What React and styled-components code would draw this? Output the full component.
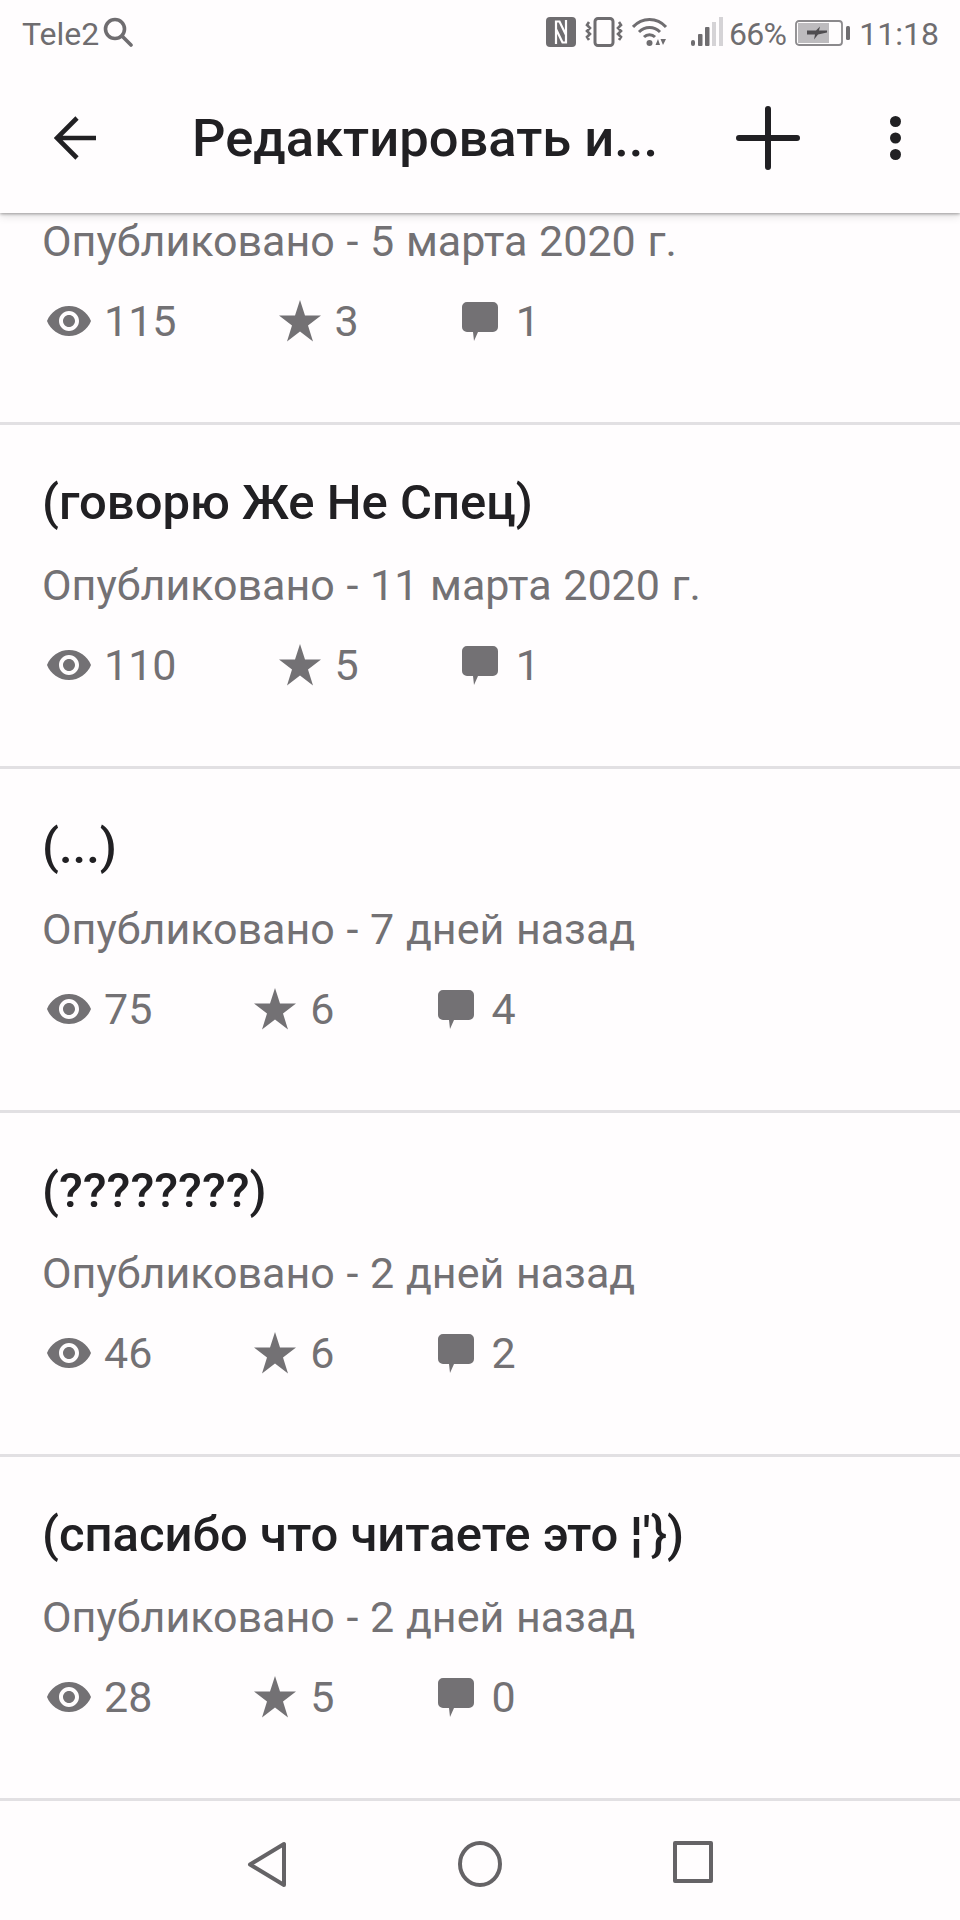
import styled, { createGlobalStyle } from "styled-components";

const GlobalStyle = createGlobalStyle`
  html, body {
    margin: 0;
    padding: 0;
    background: #fffdfe;
  }
  * {
    box-sizing: border-box;
  }
`;

const Screen = styled.div`
  width: 960px;
  height: 1920px;
  display: flex;
  flex-direction: column;
  background: #fffdfe;
  font-family: Roboto, "Noto Sans", sans-serif;
  overflow: hidden;
`;

const TopBar = styled.header`
  position: relative;
  z-index: 2;
  height: 213px;
  flex: none;
  background: #fffdfe;
  box-shadow: 0 1px 3px rgba(0, 0, 0, 0.35), 0 4px 8px rgba(0, 0, 0, 0.1);
`;

const StatusBar = styled.div`
  height: 66px;
  padding: 15px 21px 0 22px;
  display: flex;
  align-items: flex-start;
  color: #6f6d70;
  font-size: 32px;
  line-height: 38px;
`;

const Carrier = styled.div`
  display: flex;
  align-items: flex-start;
  gap: 4px;
  flex: 1;
`;

const StatusIcons = styled.div`
  display: flex;
  align-items: flex-start;
`;

const Percent = styled.span`
  letter-spacing: -0.7px;
`;

const StatusIcon = styled.svg`
  display: block;
  margin-top: ${(p) => p.$top ?? 2}px;
  margin-left: ${(p) => p.$before || 0}px;
  margin-right: ${(p) => p.$gap || 0}px;
  flex: none;
`;

const ToolBar = styled.div`
  height: 146px;
  display: flex;
  align-items: center;
  padding: 0 0 2px 54px;
  color: #212023;
`;

const Title = styled.h1`
  margin: 0 0 0 96px;
  width: 544px;
  font-size: 52.5px;
  font-weight: 500;
  line-height: 60px;
  white-space: nowrap;
`;

const ToolIcon = styled.svg`
  display: block;
  flex: none;
  margin-right: ${(p) => p.$gap || 0}px;
`;

const List = styled.main`
  flex: 1;
  min-height: 0;
  display: flex;
  flex-direction: column;
  justify-content: flex-end;
  overflow: hidden;
`;

const Row = styled.article`
  flex: none;
  height: 344px;
  padding: 46px 0 0 42px;
  border-bottom: 3px solid #e2e0e3;
`;

const RowTitle = styled.h2`
  margin: 0;
  height: 64px;
  font-size: 49px;
  font-weight: 500;
  line-height: 64px;
  color: #212023;
  white-space: nowrap;
`;

const Published = styled.p`
  margin: 26px 0 0;
  font-size: 43px;
  line-height: 48px;
  word-spacing: 1px;
  color: #737174;
  white-space: nowrap;
`;

const Stats = styled.div`
  margin-top: 31px;
  display: flex;
  align-items: center;
  gap: 102px;
  color: #737174;
  font-size: 43px;
  line-height: 50px;
`;

const Stat = styled.div`
  display: flex;
  align-items: center;
  gap: ${(p) => p.$gap}px;
`;

const EyeIcon = styled.svg`
  display: block;
  margin-left: 3px;
`;

const NavBar = styled.nav`
  height: 119px;
  flex: none;
  display: flex;
  justify-content: center;
  align-items: flex-start;
  padding: 40px 0 0 0;
  gap: 171px;
`;

const NavIcon = styled.svg`
  display: block;
`;

const Eye = () => (
  <EyeIcon width="48" height="48" viewBox="0 0 24 24" fill="#737174">
    <path d="M12 4.5C7 4.5 2.73 7.61 1 12c1.73 4.39 6 7.5 11 7.5s9.27-3.11 11-7.5c-1.73-4.39-6-7.5-11-7.5zM12 17c-2.76 0-5-2.24-5-5s2.24-5 5-5 5 2.24 5 5-2.24 5-5 5zm0-8c-1.66 0-3 1.34-3 3s1.34 3 3 3 3-1.34 3-3-1.34-3-3-3z" />
  </EyeIcon>
);

const Star = () => (
  <svg width="42" height="42" viewBox="0 0 42 42" fill="#737174">
    <polygon points="21,0 26,15.5 42,15.5 29,25.5 34,41.5 21,31.5 8,41.5 13,25.5 0,15.5 16,15.5" />
  </svg>
);

const Bubble = () => (
  <svg width="38" height="42" viewBox="0 0 38 42" fill="#737174">
    <path d="M6 2h26a5 5 0 0 1 5 5v20a5 5 0 0 1-5 5H17l-4 9-1-9H6a5 5 0 0 1-5-5V7a5 5 0 0 1 5-5z" />
  </svg>
);

const items = [
  { title: "", date: "5 марта 2020 г.", views: 115, stars: 3, comments: 1 },
  { title: "(говорю Же Не Спец)", date: "11 марта 2020 г.", views: 110, stars: 5, comments: 1 },
  { title: "(...)", date: "7 дней назад", views: 75, stars: 6, comments: 4 },
  { title: "(????????)", date: "2 дней назад", views: 46, stars: 6, comments: 2 },
  { title: "(спасибо что читаете это ¦'})", date: "2 дней назад", views: 28, stars: 5, comments: 0 },
];

export default function App() {
  return (
    <Screen>
      <GlobalStyle />
      <TopBar>
        <StatusBar>
          <Carrier>
            Tele2
            <StatusIcon width="30" height="30" viewBox="0 0 30 30" $top={2} fill="none" stroke="#6f6d70" strokeWidth="3.6">
              <circle cx="12" cy="12" r="9.5" />
              <path d="M19 19l9 9" strokeLinecap="round" />
            </StatusIcon>
          </Carrier>
          <StatusIcons>
            <StatusIcon width="30" height="30" viewBox="0 0 30 30" $gap={9}>
              <rect width="30" height="30" rx="4" fill="#6f6d70" />
              <path d="M10 27V4.500h3.500L20 18M20 3v22.500h-3.500L10 12" fill="none" stroke="#fffdfe" strokeWidth="2.2" />
            </StatusIcon>
            <StatusIcon width="38" height="30" viewBox="0 0 38 30" $gap={9} fill="none" stroke="#6f6d70">
              <rect x="10" y="1.5" width="18" height="27" rx="3" strokeWidth="3" />
              <path d="M4 5l-2 3 3 3-3 3 3 3-3 3 2 3M34 5l2 3-3 3 3 3-3 3 3 3-2 3" strokeWidth="2.6" />
            </StatusIcon>
            <StatusIcon width="36" height="30" viewBox="0 0 36 30" $gap={23} fill="none" stroke="#6f6d70" strokeWidth="3">
              <path d="M1 10C10 0 25 0 34 10M7 15c6-6 15-6 21 0M12 20c3-3 8-3 11 0" />
              <circle cx="17.5" cy="26" r="3" fill="#6f6d70" stroke="none" />
              <path d="M26 22l-2.500 6H28zM31 28l-2.500-6H34z" fill="#6f6d70" stroke="none" />
            </StatusIcon>
            <StatusIcon width="32" height="30" viewBox="0 0 32 30" $gap={6}>
              <rect x="0" y="23" width="4" height="6" rx="2" fill="#6f6d70" />
              <rect x="7" y="17" width="4.5" height="12" rx="1" fill="#6f6d70" />
              <rect x="14" y="10" width="4.5" height="19" rx="1" fill="#6f6d70" />
              <rect x="21" y="5" width="4" height="24" fill="#d5d3d6" />
              <rect x="28" y="0" width="4" height="29" fill="#d5d3d6" />
            </StatusIcon>
            <Percent>66%</Percent>
            <StatusIcon width="56" height="26" viewBox="0 0 56 26" $top={5} $before={9} $gap={8}>
              <rect x="1" y="1" width="46" height="24" rx="3" fill="none" stroke="#8b898c" strokeWidth="1.8" />
              <rect x="3" y="3" width="31" height="20" fill="#bdbbbe" />
              <path d="M12 10.500h9l4-4-1 4h8v2l-9 2-4 5 1-5h-8z" fill="#4f4d50" />
              <rect x="51" y="6" width="4" height="14" rx="1.5" fill="#6f6d70" />
            </StatusIcon>
            <span>11:18</span>
          </StatusIcons>
        </StatusBar>
        <ToolBar>
          <ToolIcon width="42" height="44" viewBox="0 0 42 44" fill="none" stroke="#212023" strokeWidth="4.6">
            <path d="M42 22H3M23 2L3 22l20 20" />
          </ToolIcon>
          <Title>Редактировать и...</Title>
          <ToolIcon width="64" height="64" viewBox="0 0 64 64" $gap={90} fill="none" stroke="#212023" strokeWidth="6" strokeLinecap="round">
            <path d="M3 32h58M32 3v58" />
          </ToolIcon>
          <ToolIcon width="11" height="44" viewBox="0 0 11 44" fill="#212023">
            <circle cx="5.5" cy="5.5" r="5.5" />
            <circle cx="5.5" cy="22" r="5.5" />
            <circle cx="5.5" cy="38.5" r="5.5" />
          </ToolIcon>
        </ToolBar>
      </TopBar>
      <List>
        {items.map((item, i) => (
          <Row key={i}>
            <RowTitle>{item.title}</RowTitle>
            <Published>Опубликовано - {item.date}</Published>
            <Stats>
              <Stat $gap={11}>
                <Eye />
                {item.views}
              </Stat>
              <Stat $gap={14}>
                <Star />
                {item.stars}
              </Stat>
              <Stat $gap={17}>
                <Bubble />
                {item.comments}
              </Stat>
            </Stats>
          </Row>
        ))}
      </List>
      <NavBar>
        <NavIcon width="40" height="47" viewBox="0 0 40 47" fill="none" stroke="#656366" strokeWidth="4" strokeLinejoin="round">
          <path d="M37 3v41L3 23.500z" />
        </NavIcon>
        <NavIcon width="44" height="46" viewBox="0 0 44 46" fill="none" stroke="#656366" strokeWidth="4">
          <ellipse cx="22" cy="23" rx="20" ry="21" />
        </NavIcon>
        <NavIcon width="40" height="42" viewBox="0 0 40 42" fill="none" stroke="#656366" strokeWidth="4" strokeLinejoin="round">
          <rect x="2" y="2" width="36" height="38" />
        </NavIcon>
      </NavBar>
    </Screen>
  );
}
